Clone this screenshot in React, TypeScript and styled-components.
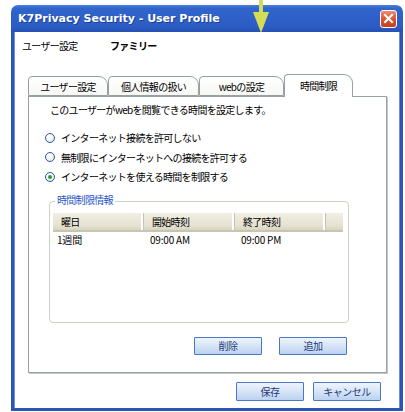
import React from 'react';
import styled, { createGlobalStyle } from 'styled-components';

const JP = `"Noto Sans CJK JP", "Liberation Sans", sans-serif`;

const GlobalStyle = createGlobalStyle`
  html, body {
    margin: 0;
    padding: 0;
    background: #fff;
  }
  body {
    font-family: ${JP};
    font-size: 10px;
    letter-spacing: -0.7px;
    color: #000;
  }
  * {
    box-sizing: border-box;
  }
`;

const Screen = styled.div`
  position: relative;
  width: 405px;
  height: 412px;
  overflow: hidden;
  padding: 5px 0 0 11px;
`;

const Window = styled.div`
  width: 392px;
  height: 406px;
  display: flex;
  flex-direction: column;
`;

const TitleBar = styled.div`
  height: 27px;
  flex: none;
  display: flex;
  align-items: center;
  justify-content: space-between;
  padding: 0 6px 0 7px;
  border-radius: 7px 7px 0 0;
  background: linear-gradient(#4a7fe0 0%, #3065cc 12%, #2c5cc4 80%, #2651b6 100%);
`;

const Title = styled.span`
  color: #fff;
  font-family: 'DejaVu Sans', sans-serif;
  font-weight: bold;
  font-size: 11px;
  letter-spacing: 0;
  text-shadow: 1px 1px 0 rgba(10, 30, 100, 0.5);
`;

const CloseButton = styled.div`
  width: 17px;
  height: 18px;
  border: 1px solid #fff;
  border-radius: 3px;
  background: linear-gradient(#ee8c6e, #d6532f 55%, #c5401f);
  display: flex;
  align-items: center;
  justify-content: center;
`;

const Arrow = styled.svg`
  position: absolute;
  left: 252px;
  top: 0;
`;

const Client = styled.div`
  flex: 1;
  display: flex;
  flex-direction: column;
  background: #fff;
  border: 3px solid #2d54b9;
  border-top: none;
  box-shadow: inset 1px 0 0 #6f8fd8, inset -1px 0 0 #6f8fd8;
`;

const UserRow = styled.div`
  display: flex;
  margin: 6px 0 0 8px;
  height: 16px;
  line-height: 16px;
`;

const UserLabel = styled.span`
  width: 88px;
`;

const UserName = styled.span`
  font-weight: bold;
`;

const TabStrip = styled.div`
  display: flex;
  align-items: flex-end;
  height: 22px;
  margin: 20px 0 0 14px;
`;

const Tab = styled.div<{ $w: number; $active?: boolean }>`
  position: relative;
  z-index: ${(p) => (p.$active ? 2 : 1)};
  width: ${(p) => p.$w}px;
  height: ${(p) => (p.$active ? 23 : 20)}px;
  margin-bottom: ${(p) => (p.$active ? -1 : 0)}px;
  display: flex;
  align-items: center;
  justify-content: center;
  padding-bottom: ${(p) => (p.$active ? 2 : 0)}px;
  border: 1px solid #98a0a4;
  border-bottom: ${(p) => (p.$active ? 'none' : '1px solid #98a0a4')};
  border-radius: 4px 9px 0 0;
  background: ${(p) => (p.$active ? '#fff' : 'linear-gradient(#fff, #f7f7f4)')};
`;

const Panel = styled.div`
  margin-left: 14px;
  width: 359px;
  height: 277px;
  display: flex;
  flex-direction: column;
  border: 1px solid #98a0a4;
  box-shadow: 1px 1px 0 #c9c9c4;
`;

const Description = styled.div`
  margin: 5px 0 0 21px;
  height: 16px;
  line-height: 16px;
`;

const RadioList = styled.div`
  margin-top: 10px;
  display: flex;
  flex-direction: column;
`;

const RadioRow = styled.label`
  display: flex;
  align-items: center;
  height: 19.5px;
  padding-left: 16px;
`;

const RadioMark = styled.span<{ $checked?: boolean }>`
  width: 10px;
  height: 10px;
  margin-right: 6px;
  border-radius: 50%;
  border: 1px solid #2a5aa6;
  background: radial-gradient(circle at 40% 35%, #fff 20%, #dcdcd4 100%);
  display: flex;
  align-items: center;
  justify-content: center;
  &::after {
    content: '';
    display: ${(p) => (p.$checked ? 'block' : 'none')};
    width: 4px;
    height: 4px;
    border-radius: 50%;
    background: #2f9a3a;
  }
`;

const GroupBox = styled.div`
  position: relative;
  margin: 14px 0 0 20px;
  width: 300px;
  height: 122px;
  padding: 11px 5px 0 3px;
  border: 1px solid #d0d0c4;
  border-radius: 4px;
`;

const GroupLabel = styled.span`
  position: absolute;
  left: 5px;
  top: -10px;
  padding: 0 2px;
  background: #fff;
  color: #1f55cc;
  line-height: 16px;
`;

const ListHeader = styled.div`
  display: flex;
  height: 19px;
  background: linear-gradient(#f1efe2, #e6e3d3 70%, #d8d4c2);
  border-bottom: 2px solid #c8c4b0;
`;

const HeaderCell = styled.div<{ $w: number }>`
  width: ${(p) => p.$w}px;
  padding-left: 8px;
  line-height: 17px;
  border-right: 1px solid #c6c2b0;
  box-shadow: inset -2px 0 0 #fff;
`;

const ListRow = styled.div`
  display: flex;
  height: 15px;
  line-height: 15px;
  letter-spacing: -0.2px;
`;

const Cell = styled.div<{ $w: number; $pad: number }>`
  width: ${(p) => p.$w}px;
  padding-left: ${(p) => p.$pad}px;
`;

const ButtonRow = styled.div<{ $mt: number; $pr: number; $gap: number }>`
  display: flex;
  justify-content: flex-end;
  gap: ${(p) => p.$gap}px;
  margin-top: ${(p) => p.$mt}px;
  padding-right: ${(p) => p.$pr}px;
`;

const Button = styled.button<{ $h: number }>`
  width: 68px;
  height: ${(p) => p.$h}px;
  padding: 0;
  border: 1px solid #4a78c2;
  border-radius: 1px;
  background: linear-gradient(#eef4fc, #d9e6f7 45%, #bcd2f0);
  font-family: ${JP};
  font-size: 10px;
  letter-spacing: -0.5px;
  color: #233a78;
`;

const columns = [
  { title: '曜日', w: 91 },
  { title: '開始時刻', w: 91 },
  { title: '終了時刻', w: 91 },
];

const schedule = [{ day: '1週間', start: '09:00 AM', end: '09:00 PM' }];

const radios = [
  { label: 'インターネット接続を許可しない', checked: false },
  { label: '無制限にインターネットへの接続を許可する', checked: false },
  { label: 'インターネットを使える時間を制限する', checked: true },
];

const tabs = [
  { label: 'ユーザー設定', w: 80 },
  { label: '個人情報の扱い', w: 91 },
  { label: 'webの設定', w: 85 },
  { label: '時間制限', w: 69, active: true },
];

export default function App() {
  return (
    <Screen>
      <GlobalStyle />
      <Window>
        <TitleBar>
          <Title>K7Privacy Security - User Profile</Title>
          <CloseButton>
            <svg width="11" height="11" viewBox="0 0 11 11">
              <path d="M2 2 L9 9 M9 2 L2 9" stroke="#fff" strokeWidth="2" strokeLinecap="square" />
            </svg>
          </CloseButton>
        </TitleBar>
        <Client>
          <UserRow>
            <UserLabel>ユーザー設定</UserLabel>
            <UserName>ファミリー</UserName>
          </UserRow>
          <TabStrip>
            {tabs.map((t) => (
              <Tab key={t.label} $w={t.w} $active={t.active}>
                {t.label}
              </Tab>
            ))}
          </TabStrip>
          <Panel>
            <Description>このユーザーがwebを閲覧できる時間を設定します。</Description>
            <RadioList>
              {radios.map((r) => (
                <RadioRow key={r.label}>
                  <RadioMark $checked={r.checked} />
                  {r.label}
                </RadioRow>
              ))}
            </RadioList>
            <GroupBox>
              <GroupLabel>時間制限情報</GroupLabel>
              <ListHeader>
                {columns.map((c) => (
                  <HeaderCell key={c.title} $w={c.w}>
                    {c.title}
                  </HeaderCell>
                ))}
              </ListHeader>
              {schedule.map((s) => (
                <ListRow key={s.day}>
                  <Cell $w={91} $pad={4}>{s.day}</Cell>
                  <Cell $w={91} $pad={6}>{s.start}</Cell>
                  <Cell $w={91} $pad={6}>{s.end}</Cell>
                </ListRow>
              ))}
            </GroupBox>
            <ButtonRow $mt={14} $pr={39} $gap={17}>
              <Button $h={18}>削除</Button>
              <Button $h={18}>追加</Button>
            </ButtonRow>
          </Panel>
          <ButtonRow $mt={9} $pr={19} $gap={9}>
            <Button $h={19}>保存</Button>
            <Button $h={19}>キャンセル</Button>
          </ButtonRow>
        </Client>
      </Window>
      <Arrow width="18" height="34" viewBox="0 0 18 34">
        <rect x="7" y="0" width="4" height="14" fill="#d3dd55" />
        <polygon points="1,12 17,12 9,33" fill="#d3dd55" />
      </Arrow>
    </Screen>
  );
}
